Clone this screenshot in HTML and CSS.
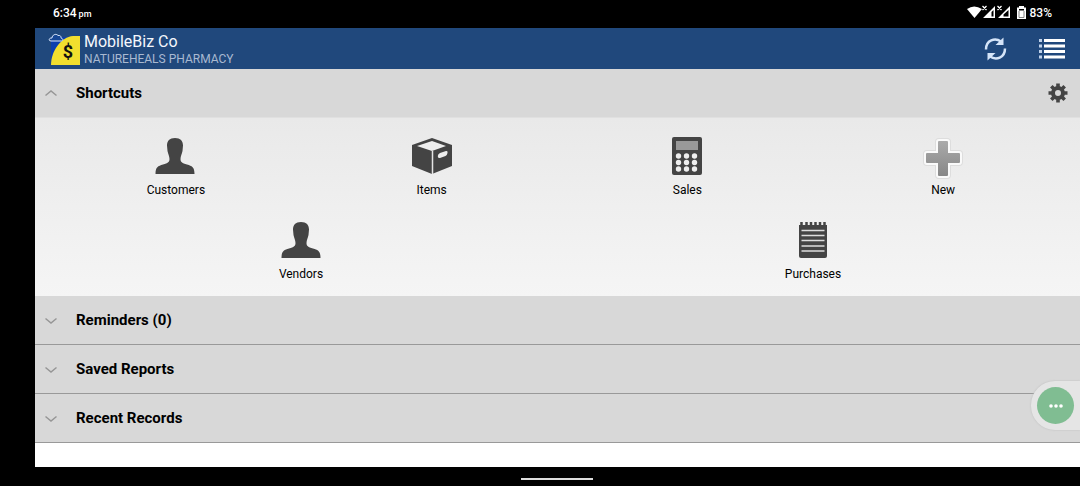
FILE: index.html
```html
<!DOCTYPE html>
<html lang="en">
<head>
<meta charset="utf-8">
<meta name="viewport" content="width=device-width, initial-scale=1">
<title>MobileBiz Co</title>
<link rel="stylesheet" href="styles.css">
</head>
<body>
<div class="status-bar">
  <div class="clock">6:34 <span class="meridiem">pm</span></div>
  <div class="status-icons">
    <svg width="60" height="16" viewBox="0 0 60 16" fill="#fff" aria-hidden="true">
      <path d="M0 4Q7 -1 15 4L7.500 13z"/>
      <path d="M15.500 1l4 4M19.500 1l-4 4M30.500 1l4 4M34.500 1l-4 4" stroke="#fff" stroke-width="1.300"/>
      <path d="M28 1V13H16zM43 1V13H31z"/>
      <path d="M26.500 5v6.500H24.500V7zM41.500 5v6.500H36.500V9.500z" fill="#000"/>
      <path d="M52 1h5v1.500h2V14h-9V2.500h2z"/>
      <path d="M52 4h5v1.500h-5z" fill="#000"/>
      <path d="M52 6v6.500h5V6" fill="none" stroke="#666" stroke-width=".8"/>
    </svg>
    <span>83%</span>
  </div>
</div>
<div class="app">
  <header class="app-bar">
    <svg class="logo" width="33" height="34" viewBox="0 0 33 34" aria-hidden="true">
      <path d="M3 5h29v28H3z" fill="#0b3fae"/>
      <path d="M3 33C3 19 13 5 25 4h7v29z" fill="#f2df2e"/>
      <path d="M3 9C0 9 1 5.500 4 6C4 3 8 1 10 3.500C13 3 13 5 13 6C16 7 15 9 13 9z" fill="#174795" stroke="#dce8fb"/>
      <text class="logo-sign" x="20" y="26" text-anchor="middle">$</text>
    </svg>
    <div class="titles">
      <h1 class="title">MobileBiz Co</h1>
      <p class="subtitle">NATUREHEALS PHARMACY</p>
    </div>
    <div class="actions">
      <button class="icon-button" type="button" aria-label="Refresh">
        <svg width="24" height="24" viewBox="0 0 24 24" fill="none" stroke="#d5e4f8" stroke-width="2.500">
          <path d="M2 12.500C2 3 11 .5 17 4.500M21 11.500C21 21 12 23.500 6 19.500"/>
          <path d="M19.500 .5V8h-8zM3.500 23.500V16h8z" fill="#d5e4f8" stroke="none"/>
        </svg>
      </button>
      <button class="icon-button" type="button" aria-label="Menu">
        <svg width="26" height="20" viewBox="0 0 26 20" fill="#fff">
          <path d="M5 0h21v3H5zM5 5.500h21v3H5zM5 11h21v3H5zM5 16.500h21v3H5z"/>
          <path d="M0 0h3v3H0zM0 5.500h3v3H0zM0 11h3v3H0zM0 16.500h3v3H0z" fill="#bfd1ea"/>
        </svg>
      </button>
    </div>
  </header>

  <main>
    <section>
      <div class="section-bar first">
        <button class="section-toggle" type="button" aria-expanded="true">
          <svg width="12" height="7" viewBox="0 0 12 7" class="chevron"><path d="M.5 5.500L6 1l5.500 4.500"/></svg>
          <span>Shortcuts</span>
        </button>
        <button class="icon-button" type="button" aria-label="Shortcut settings">
          <svg width="20" height="20" viewBox="0 0 20 20" fill="none" stroke="#444">
            <circle cx="10" cy="10" r="5" stroke-width="4"/>
            <path d="M10 .5v4M10 15.500v4M.5 10h4M15.500 10h4M3.300 3.300l2.800 2.800M13.900 13.900l2.800 2.800M3.300 16.700l2.800-2.800M13.900 6.100l2.800-2.800" stroke-width="3.600"/>
          </svg>
        </button>
      </div>
      <div class="shortcuts">
        <div class="shortcut-row four">
          <button class="shortcut" type="button">
            <svg width="42" height="40" viewBox="0 0 42 40" fill="#444"><path d="M20 1C14.500 1 12 4 12 8.500L12.500 14C13 17 14.500 19 14.500 22C14.500 25 13 26 8 27.500C3 29 .5 30 .5 37h39C39.500 30 37 29 32 27.500C27 26 25.500 25 25.500 22C25.500 19 27 17 27.500 14L28 8.500C28 4 25.500 1 20 1z"/></svg>
            <span>Customers</span>
          </button>
          <button class="shortcut" type="button">
            <svg width="40" height="40" viewBox="0 0 40 40" fill="#444"><path d="M20 1L40 8V29L20 37L0 29V8z"/><path d="M20 4L34 9L20 14L5 9z" fill="#eee"/><path d="M20.500 14v23" stroke="#e4e4e4" stroke-width="1.500"/><path d="M28 16L34 14Q36 13.500 35.500 16Q35 18.500 33.500 19L28 21Q25.500 21.500 25.800 19Q26 17 28 16z" fill="#eee"/></svg>
            <span>Items</span>
          </button>
          <button class="shortcut" type="button">
            <svg width="40" height="40" viewBox="0 0 40 40"><rect x="5" y="0" width="30" height="38" rx="2" fill="#444"/><path d="M9 4h22v9H9z" fill="#999"/><g fill="#eee"><circle cx="11.500" cy="19" r="2.700"/><circle cx="19.500" cy="19" r="2.700"/><circle cx="27.500" cy="19" r="2.700"/><circle cx="11.500" cy="25.500" r="2.700"/><circle cx="19.500" cy="25.500" r="2.700"/><circle cx="27.500" cy="25.500" r="2.700"/><circle cx="11.500" cy="32" r="2.700"/><circle cx="19.500" cy="32" r="2.700"/><circle cx="27.500" cy="32" r="2.700"/></g></svg>
            <span>Sales</span>
          </button>
          <button class="shortcut" type="button">
            <svg width="40" height="42" viewBox="0 0 40 42"><defs><linearGradient id="plus" x2="0" y2="1"><stop stop-color="#aaa"/><stop offset="1" stop-color="#878787"/></linearGradient></defs><path d="M16 4h8q1 0 1 1v11h11q1 0 1 1v8q0 1-1 1H25v12q0 1-1 1h-8q-1 0-1-1V26H4q-1 0-1-1v-8q0-1 1-1h11V5q0-1 1-1z" fill="none" stroke="#ddd" stroke-width="6" stroke-linejoin="round"/><path d="M16 4h8q1 0 1 1v11h11q1 0 1 1v8q0 1-1 1H25v12q0 1-1 1h-8q-1 0-1-1V26H4q-1 0-1-1v-8q0-1 1-1h11V5q0-1 1-1z" fill="url(#plus)" stroke="#fafafa" stroke-width="4" stroke-linejoin="round" paint-order="stroke"/></svg>
            <span>New</span>
          </button>
        </div>
        <div class="shortcut-row two">
          <button class="shortcut" type="button">
            <svg width="40" height="40" viewBox="0 0 40 40" fill="#444"><path d="M20 1C14.500 1 12 4 12 8.500L12.500 14C13 17 14.500 19 14.500 22C14.500 25 13 26 8 27.500C3 29 .5 30 .5 37h39C39.500 30 37 29 32 27.500C27 26 25.500 25 25.500 22C25.500 19 27 17 27.500 14L28 8.500C28 4 25.500 1 20 1z"/></svg>
            <span>Vendors</span>
          </button>
          <button class="shortcut" type="button">
            <svg width="40" height="40" viewBox="0 0 40 40"><path d="M6 4h28v31q0 2-2 2H8q-2 0-2-2z" fill="#444"/><path d="M8.500 1v4M13.500 1v4M18 1v4M22.500 1v4M27 1v4M31.500 1v4" stroke="#444" stroke-width="2.500"/><path d="M8.500 9.500h23M8.500 14.500h23M8.500 19.500h23M8.500 25h23M8.500 30h23" stroke="#ddd" stroke-width="1.600"/></svg>
            <span>Purchases</span>
          </button>
        </div>
      </div>
    </section>
    <section class="section-bar">
      <button class="section-toggle" type="button" aria-expanded="false">
        <svg width="12" height="7" viewBox="0 0 12 7" class="chevron"><path d="M.5 1.500L6 6l5.500-4.500"/></svg>
        <span>Reminders (0)</span>
      </button>
    </section>
    <section class="section-bar">
      <button class="section-toggle" type="button" aria-expanded="false">
        <svg width="12" height="7" viewBox="0 0 12 7" class="chevron"><path d="M.5 1.500L6 6l5.500-4.500"/></svg>
        <span>Saved Reports</span>
      </button>
    </section>
    <section class="section-bar">
      <button class="section-toggle" type="button" aria-expanded="false">
        <svg width="12" height="7" viewBox="0 0 12 7" class="chevron"><path d="M.5 1.500L6 6l5.500-4.500"/></svg>
        <span>Recent Records</span>
      </button>
    </section>
  </main>
</div>
<div class="nav-bar"><div class="nav-handle"></div></div>
<div class="floating">
  <button class="floating-button" type="button" aria-label="More">
    <svg width="16" height="4" viewBox="0 0 16 4" fill="#fff"><circle cx="3" cy="2" r="1.800"/><circle cx="8" cy="2" r="1.800"/><circle cx="13" cy="2" r="1.800"/></svg>
  </button>
</div>
</body>
</html>
```
FILE: styles.css
```css
* { box-sizing: border-box; }

body {
  margin: 0;
  min-height: 100vh;
  display: flex;
  flex-direction: column;
  background: #000;
  color: #000;
  font-family: Roboto, "Liberation Sans", sans-serif;
}

button {
  margin: 0;
  padding: 0;
  border: 0;
  background: none;
  color: inherit;
  font: inherit;
  cursor: pointer;
}

svg { display: block; flex: none; }

.status-bar {
  display: flex;
  justify-content: space-between;
  align-items: center;
  height: 28px;
  padding: 0 28px 2px 53px;
  color: #fff;
  font-size: 12px;
  font-weight: 500;
}

.meridiem { font-size: 9px; margin-left: -1px; }

.status-icons {
  display: flex;
  align-items: center;
  gap: 3px;
}

.app {
  flex: 1;
  margin-left: 35px;
  background: #fff;
}

.app-bar {
  display: flex;
  align-items: center;
  height: 41px;
  padding: 0 15px 0 13px;
  background: #20487c;
}

.logo-sign { font-size: 18px; font-weight: 700; fill: #111; }

.titles { margin-left: 3px; padding-top: 2px; }

.title {
  margin: 0;
  color: #f4f7fc;
  font-size: 16px;
  font-weight: 400;
  line-height: 18px;
}

.subtitle {
  margin: 0;
  color: #a9b9d1;
  font-size: 12px;
  line-height: 16px;
}

.actions {
  display: flex;
  align-items: center;
  gap: 31px;
  margin-left: auto;
}

.section-bar {
  display: flex;
  align-items: center;
  min-height: 49px;
  padding-right: 12px;
  background: #d8d8d8;
  border-bottom: 1px solid #999;
}

.section-bar.first { border-bottom-color: #e0e0e0; }

.section-toggle {
  display: flex;
  flex: 1;
  align-items: center;
  gap: 19px;
  height: 48px;
  padding-left: 10px;
  font-size: 15px;
  font-weight: 700;
  text-align: left;
}

.chevron { fill: none; stroke: #969696; stroke-width: 1.5; }

.shortcuts {
  padding: 19px 9px 14px 10px;
  background: linear-gradient(#e9e9e9, #f5f5f5);
}

.shortcut-row { display: grid; }
.four { grid-template-columns: repeat(4, 1fr); padding-left: 3px; }
.two { grid-template-columns: repeat(2, 1fr); margin-top: 23px; padding-right: 2px; }

.shortcut {
  display: flex;
  flex-direction: column;
  align-items: center;
  height: 61px;
  justify-content: space-between;
  font-size: 12px;
  line-height: 16px;
}

.nav-bar {
  display: flex;
  justify-content: center;
  height: 19px;
  padding: 11px 0 0 34px;
}

.nav-handle { width: 72px; height: 2px; background: #ddd; }

.floating {
  position: absolute;
  top: 381px;
  right: 0;
  padding: 6px;
  border-radius: 24px 0 0 24px;
  background: #e5e5e5;
  box-shadow: 0 0 2px #bbb;
}

.floating-button {
  display: flex;
  align-items: center;
  justify-content: center;
  width: 37px;
  height: 37px;
  border-radius: 50%;
  background: #80bd92;
}
```
